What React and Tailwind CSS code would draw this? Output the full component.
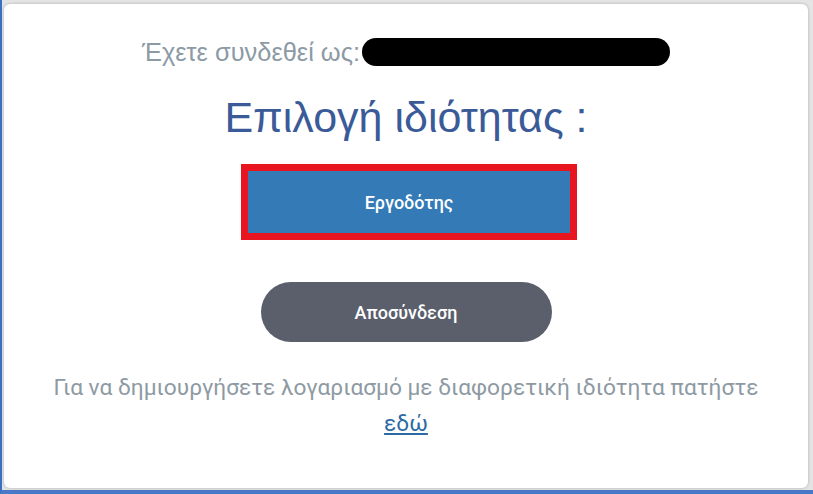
import React from "react"

// Role selection screen after login
export default function App() {
  return (
    <div className="w-[813px] h-[494px] bg-[#e4e4e4] border-l-[2px] border-l-[#3b6fc4] border-b-[4px] border-b-[#4a78c8] pt-[4px] pl-[2px] pr-[5px] pb-[2px] flex">
      <div className="flex-1 bg-white rounded-[6px] shadow-[0_0_3px_rgba(0,0,0,0.25)] flex flex-col items-center" style={{ fontFamily: "Roboto, sans-serif" }}>
        <div className="mt-[34px] h-[28px] flex items-center" style={{ fontFamily: "'Liberation Sans', Arial, sans-serif" }}>
          <span className="text-[25.4px] leading-[28px] text-[#8c9aa6]">Έχετε συνδεθεί ως:</span>
          <span className="ml-[2px] w-[308px] h-[28px] rounded-full bg-black"></span>
        </div>

        <h1 className="mt-[27px] text-[43px] leading-[48px] text-[#3b5a98]" style={{ fontFamily: "'Liberation Sans', Arial, sans-serif" }}>
          Επιλογή ιδιότητας :
        </h1>

        <div className="mt-[23px] ml-[6px] border-[7px] border-[#e8141f]">
          <button className="block w-[322px] h-[62px] bg-[#337ab7] text-white text-[18px] font-medium">
            Εργοδότης
          </button>
        </div>

        <button className="mt-[42px] w-[291px] h-[60px] rounded-full bg-[#5b5f6c] text-white text-[18px] font-medium">
          Αποσύνδεση
        </button>

        <p className="mt-[28px] text-[22.7px] leading-[36px] text-[#8e9aa3] text-center">
          Για να δημιουργήσετε λογαριασμό με διαφορετική ιδιότητα πατήστε
          <br />
          <a href="#" className="text-[#2b6aa3] underline">εδώ</a>
        </p>
      </div>
    </div>
  )
}
